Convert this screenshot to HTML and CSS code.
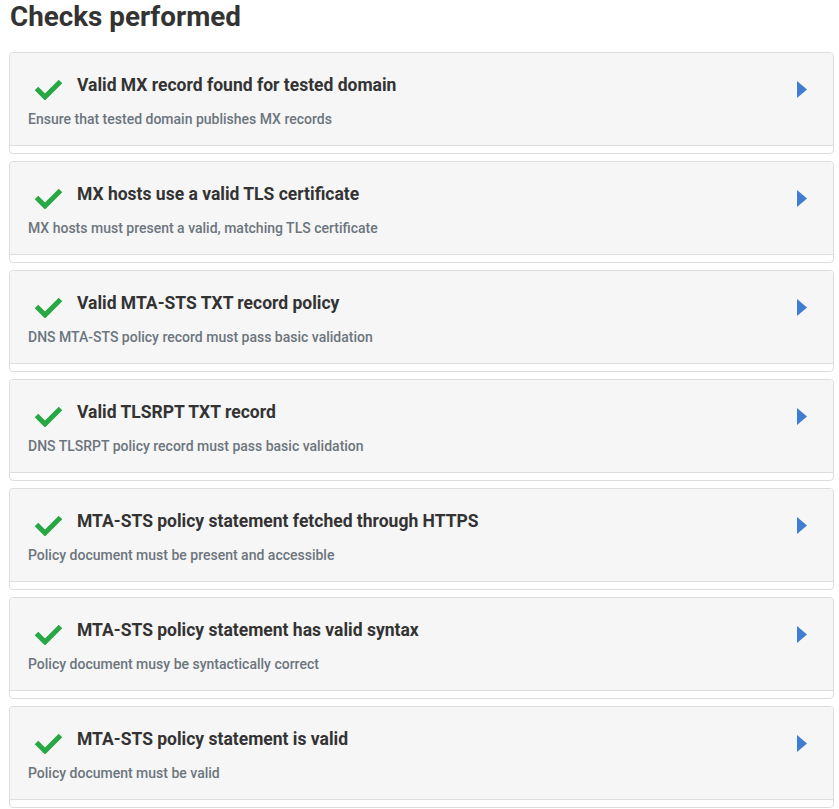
FILE: index.html
```html
<!DOCTYPE html>
<html lang="en">
<head>
<meta charset="utf-8">
<title>Checks performed</title>
<link rel="stylesheet" href="styles.css">
</head>
<body>
<div class="page">
  <h2 class="heading">Checks performed</h2>
  <div class="list">
    <div class="card">
      <div class="card-header">
        <div class="title-row">
          <svg class="check" viewBox="0 0 29 22" width="29" height="22"><polyline points="2.5,10.5 11,19 26.5,3.5" fill="none" stroke="#28a745" stroke-width="5"/></svg>
          <span class="title">Valid MX record found for tested domain</span>
          <svg class="caret" viewBox="0 0 10 17" width="10" height="17"><polygon points="0,0 10,8.5 0,17" fill="#3f7dd1"/></svg>
        </div>
        <div class="desc">Ensure that tested domain publishes MX records</div>
      </div>
      <div class="card-body"></div>
    </div>
    <div class="card">
      <div class="card-header">
        <div class="title-row">
          <svg class="check" viewBox="0 0 29 22" width="29" height="22"><polyline points="2.5,10.5 11,19 26.5,3.5" fill="none" stroke="#28a745" stroke-width="5"/></svg>
          <span class="title">MX hosts use a valid TLS certificate</span>
          <svg class="caret" viewBox="0 0 10 17" width="10" height="17"><polygon points="0,0 10,8.5 0,17" fill="#3f7dd1"/></svg>
        </div>
        <div class="desc">MX hosts must present a valid, matching TLS certificate</div>
      </div>
      <div class="card-body"></div>
    </div>
    <div class="card">
      <div class="card-header">
        <div class="title-row">
          <svg class="check" viewBox="0 0 29 22" width="29" height="22"><polyline points="2.5,10.5 11,19 26.5,3.5" fill="none" stroke="#28a745" stroke-width="5"/></svg>
          <span class="title">Valid MTA-STS TXT record policy</span>
          <svg class="caret" viewBox="0 0 10 17" width="10" height="17"><polygon points="0,0 10,8.5 0,17" fill="#3f7dd1"/></svg>
        </div>
        <div class="desc">DNS MTA-STS policy record must pass basic validation</div>
      </div>
      <div class="card-body"></div>
    </div>
    <div class="card">
      <div class="card-header">
        <div class="title-row">
          <svg class="check" viewBox="0 0 29 22" width="29" height="22"><polyline points="2.5,10.5 11,19 26.5,3.5" fill="none" stroke="#28a745" stroke-width="5"/></svg>
          <span class="title">Valid TLSRPT TXT record</span>
          <svg class="caret" viewBox="0 0 10 17" width="10" height="17"><polygon points="0,0 10,8.5 0,17" fill="#3f7dd1"/></svg>
        </div>
        <div class="desc">DNS TLSRPT policy record must pass basic validation</div>
      </div>
      <div class="card-body"></div>
    </div>
    <div class="card">
      <div class="card-header">
        <div class="title-row">
          <svg class="check" viewBox="0 0 29 22" width="29" height="22"><polyline points="2.5,10.5 11,19 26.5,3.5" fill="none" stroke="#28a745" stroke-width="5"/></svg>
          <span class="title">MTA-STS policy statement fetched through HTTPS</span>
          <svg class="caret" viewBox="0 0 10 17" width="10" height="17"><polygon points="0,0 10,8.5 0,17" fill="#3f7dd1"/></svg>
        </div>
        <div class="desc">Policy document must be present and accessible</div>
      </div>
      <div class="card-body"></div>
    </div>
    <div class="card">
      <div class="card-header">
        <div class="title-row">
          <svg class="check" viewBox="0 0 29 22" width="29" height="22"><polyline points="2.5,10.5 11,19 26.5,3.5" fill="none" stroke="#28a745" stroke-width="5"/></svg>
          <span class="title">MTA-STS policy statement has valid syntax</span>
          <svg class="caret" viewBox="0 0 10 17" width="10" height="17"><polygon points="0,0 10,8.5 0,17" fill="#3f7dd1"/></svg>
        </div>
        <div class="desc">Policy document musy be syntactically correct</div>
      </div>
      <div class="card-body"></div>
    </div>
    <div class="card">
      <div class="card-header">
        <div class="title-row">
          <svg class="check" viewBox="0 0 29 22" width="29" height="22"><polyline points="2.5,10.5 11,19 26.5,3.5" fill="none" stroke="#28a745" stroke-width="5"/></svg>
          <span class="title">MTA-STS policy statement is valid</span>
          <svg class="caret" viewBox="0 0 10 17" width="10" height="17"><polygon points="0,0 10,8.5 0,17" fill="#3f7dd1"/></svg>
        </div>
        <div class="desc">Policy document must be valid</div>
      </div>
      <div class="card-body"></div>
    </div>
  </div>
</div>
</body>
</html>
```
FILE: styles.css
```css
html, body {
  margin: 0;
  padding: 0;
  background: #ffffff;
}
body {
  font-family: Roboto, "Liberation Sans", Arial, sans-serif;
  color: #333333;
}
.page {
  padding: 0 5px 0 9px;
}
.heading {
  margin: 0;
  padding: 0 0 0 1px;
  font-size: 27.8px;
  font-weight: 700;
  line-height: 34px;
  color: #333333;
  height: 52px;
}
.list {
  display: flex;
  flex-direction: column;
  gap: 7px;
}
.card {
  border: 1px solid #dddddd;
  border-radius: 4px;
  background: #ffffff;
}
.card-header {
  background: #f6f6f6;
  border-bottom: 1px solid #dddddd;
  border-radius: 4px 4px 0 0;
  padding: 22px 26px 16px 18px;
  display: flex;
  flex-direction: column;
  gap: 12px;
}
.title-row {
  display: flex;
  align-items: flex-start;
  height: 22px;
}
.check {
  margin: 3px 14px 0 6px;
  flex: none;
}
.title {
  font-size: 17.5px;
  font-weight: 700;
  line-height: 21px;
  color: #333333;
}
.caret {
  margin: 6px 0 0 auto;
  flex: none;
}
.desc {
  font-size: 14px;
  font-weight: 500;
  line-height: 20px;
  color: #6c757d;
}
.card-body {
  height: 7px;
}
```
